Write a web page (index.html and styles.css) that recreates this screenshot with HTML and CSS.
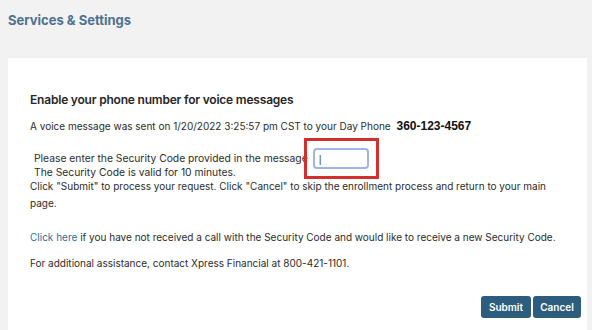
FILE: index.html
```html
<!DOCTYPE html>
<html lang="en">
<head>
  <meta charset="UTF-8">
  <meta name="viewport" content="width=device-width, initial-scale=1.0">
  <title>Services &amp; Settings</title>
  <link rel="stylesheet" href="styles.css">
</head>
<body>
  <h1 class="page-title">Services &amp; Settings</h1>

  <div class="card">
    <h2>Enable your phone number for voice messages</h2>
    <p class="sent">A voice message was sent on 1/20/2022 3:25:57 pm CST to your Day Phone <span class="phone">360-123-4567</span></p>

    <div class="code-row">
      <div class="code-text">
        <div>Please enter the Security Code provided in the message</div>
        <div>The Security Code is valid for 10 minutes.</div>
      </div>
      <span class="code-box"><input class="code-input" type="text" value="|"></span>
    </div>

    <p class="help">Click "Submit" to process your request. Click "Cancel" to skip the enrollment process and return to your main page.</p>

    <p class="resend"><a href="#">Click here</a> if you have not received a call with the Security Code and would like to receive a new Security Code.</p>

    <p class="contact">For additional assistance, contact Xpress Financial at 800-421-1101.</p>

    <div class="actions">
      <button class="btn btn-submit">Submit</button>
      <button class="btn">Cancel</button>
    </div>
  </div>
</body>
</html>
```

FILE: styles.css
```css
body {
  margin: 0;
  background: #f2f2f2;
  font-family: Inter, "Open Sans", sans-serif;
  color: #2b2b2b;
}
.page-title {
  margin: 0;
  padding: 12px 8px 0;
  height: 46px;
  font-size: 13px;
  font-weight: 700;
  color: #4f7190;
}
.card {
  margin: 0 5px 0 8px;
  padding: 34px 22px 12px;
  background: #fff;
  font-size: 10px;
}
.card h2 {
  margin: 0 0 11px;
  font-size: 12px;
  letter-spacing: -0.2px;
  font-weight: 600;
  color: #262626;
}
.card p {
  margin: 0;
  line-height: 17px;
}
.sent .phone {
  margin-left: 3px;
  font-family: "Liberation Sans", sans-serif;
  font-size: 12px;
  font-weight: 700;
  color: #111;
}
.code-row {
  display: flex;
  align-items: flex-start;
  margin-top: 14px;
  padding-left: 4px;
}
.code-text {
  font-size: 10.3px;
  line-height: 14px;
  padding-top: 2px;
}
.code-box {
  margin: -11px 0 -13px -4px;
  padding: 7px 7px 7px 6px;
  border: 3px solid #d1302f;
}
.code-input {
  display: block;
  box-sizing: border-box;
  width: 56px;
  height: 21px;
  margin: 0;
  border: 2px solid #9fb5e8;
  border-radius: 4px;
  padding: 0 4px;
  font-size: 11px;
  color: #555;
}
.help {
  margin-top: -1px !important;
}
.resend {
  margin-top: 17px !important;
}
.resend a {
  color: #2d6f9f;
  text-decoration: none;
}
.contact {
  margin-top: 9px !important;
}
.actions {
  display: flex;
  justify-content: flex-end;
  gap: 2px;
  margin: 24px -16px 0 0;
}
.btn {
  width: 48px;
  height: 22px;
  border: none;
  border-radius: 3px;
  background: #2c5d7e;
  color: #fff;
  font-family: Inter, sans-serif;
  font-size: 10px;
  font-weight: 600;
}
.btn-submit {
  width: 50px;
}
```
